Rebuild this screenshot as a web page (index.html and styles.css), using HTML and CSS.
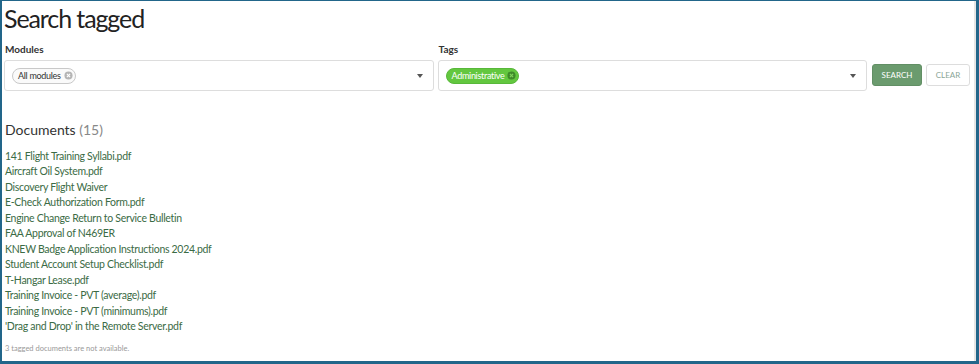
FILE: index.html
```html
<!DOCTYPE html>
<html lang="en">
<head>
    <meta charset="UTF-8">
    <title>Search tagged</title>
    <link rel="stylesheet" href="styles.css">
</head>
<body>
<div class="frame">
    <h1 class="title">Search tagged</h1>

    <div class="filters">
        <div class="field">
            <label class="field-label">Modules</label>
            <div class="select">
                <span class="chip chip-grey">All modules
                    <svg class="chip-x" viewBox="0 0 10 10"><circle cx="5" cy="5" r="4.5" fill="#b5b5b5"/><path d="M3.2 3.2 6.8 6.8M6.8 3.2 3.2 6.8" stroke="#fff" stroke-width="1.2"/></svg>
                </span>
                <span class="caret"></span>
            </div>
        </div>
        <div class="field">
            <label class="field-label">Tags</label>
            <div class="select">
                <span class="chip chip-green">Administrative
                    <svg class="chip-x" viewBox="0 0 10 10"><circle cx="5" cy="5" r="4.5" fill="#3f8a2a"/><path d="M3.2 3.2 6.8 6.8M6.8 3.2 3.2 6.8" stroke="#7ed35a" stroke-width="1.2"/></svg>
                </span>
                <span class="caret"></span>
            </div>
        </div>
        <div class="buttons">
            <button class="btn btn-search">SEARCH</button>
            <button class="btn btn-clear">CLEAR</button>
        </div>
    </div>

    <h2 class="docs-title">Documents <span class="count">(15)</span></h2>
    <ul class="docs">
        <li><a href="#">141 Flight Training Syllabi.pdf</a></li>
        <li><a href="#">Aircraft Oil System.pdf</a></li>
        <li><a href="#">Discovery Flight Waiver</a></li>
        <li><a href="#">E-Check Authorization Form.pdf</a></li>
        <li><a href="#">Engine Change Return to Service Bulletin</a></li>
        <li><a href="#">FAA Approval of N469ER</a></li>
        <li><a href="#">KNEW Badge Application Instructions 2024.pdf</a></li>
        <li><a href="#">Student Account Setup Checklist.pdf</a></li>
        <li><a href="#">T-Hangar Lease.pdf</a></li>
        <li><a href="#">Training Invoice - PVT (average).pdf</a></li>
        <li><a href="#">Training Invoice - PVT (minimums).pdf</a></li>
        <li><a href="#">'Drag and Drop' in the Remote Server.pdf</a></li>
    </ul>
    <p class="note">3 tagged documents are not available.</p>
</div>
</body>
</html>
```

FILE: styles.css
```css
html, body {
    margin: 0;
    padding: 0;
}

body {
    font-family: Lato, "Open Sans", sans-serif;
    background-color: #fff;
    color: #222;
}

.frame {
    box-sizing: border-box;
    width: 979px;
    height: 364px;
    border: 2px solid #22668a;
    border-top-width: 1px;
    border-right-width: 3px;
    border-bottom-width: 3px;
    padding: 0 6px 0 2px;
    box-shadow: inset -2px 0 0 #e6e6e6;
}

.title {
    font-size: 25px;
    font-weight: 400;
    letter-spacing: -1.1px;
    margin: 2px 0 0 0;
    line-height: 30px;
    color: #222;
}

.filters {
    display: flex;
    align-items: flex-end;
    margin-top: 10px;
}

.field {
    width: 430px;
    margin-right: 4px;
}

.field + .field {
    margin-right: 5px;
}

.field-label {
    display: block;
    font-size: 10px;
    font-weight: 700;
    color: #333;
    margin-bottom: 5px;
    margin-left: 1px;
}

.select {
    box-sizing: border-box;
    height: 31px;
    border: 1px solid #ddd;
    border-radius: 3px;
    display: flex;
    align-items: center;
    padding: 0 10px 0 7px;
}

.chip {
    display: inline-flex;
    align-items: center;
    height: 16px;
    border-radius: 8px;
    font-size: 9px;
    letter-spacing: -0.3px;
    padding: 0 2px 0 5px;
    box-sizing: border-box;
}

.chip-grey {
    border: 1px solid #c9c9c9;
    color: #333;
    background: #fafafa;
}

.chip-green {
    background: #63c73f;
    color: #fff;
    border: 1px solid #58b83a;
}

.chip-x {
    width: 9px;
    height: 9px;
    margin-left: 3px;
}

.caret {
    margin-left: auto;
    width: 0;
    height: 0;
    border-left: 3.5px solid transparent;
    border-right: 3.5px solid transparent;
    border-top: 4px solid #555;
}

.buttons {
    display: flex;
    gap: 4px;
    margin-bottom: 5px;
}

.btn {
    box-sizing: border-box;
    height: 22px;
    font-family: inherit;
    font-size: 8px;
    border-radius: 3px;
    cursor: pointer;
    padding: 0;
}

.btn-search {
    width: 50px;
    background-color: #6b9b6e;
    color: #fff;
    border: 1px solid #628f65;
}

.btn-clear {
    width: 44px;
    background-color: #fff;
    color: #8aa596;
    border: 1px solid #ddd;
}

.docs-title {
    font-size: 14px;
    font-weight: 400;
    margin: 30px 0 0 1px;
    line-height: 18px;
    color: #333;
}

.count {
    color: #888;
}

.docs {
    list-style: none;
    margin: 10px 0 0 1px;
    padding: 0;
}

.docs li {
    font-size: 10.5px;
    line-height: 15.45px;
    letter-spacing: -0.3px;
}

.docs a {
    color: #3b6b45;
    text-decoration: none;
}

.note {
    font-size: 7.5px;
    color: #999;
    margin: 10px 0 0 1px;
}
```
